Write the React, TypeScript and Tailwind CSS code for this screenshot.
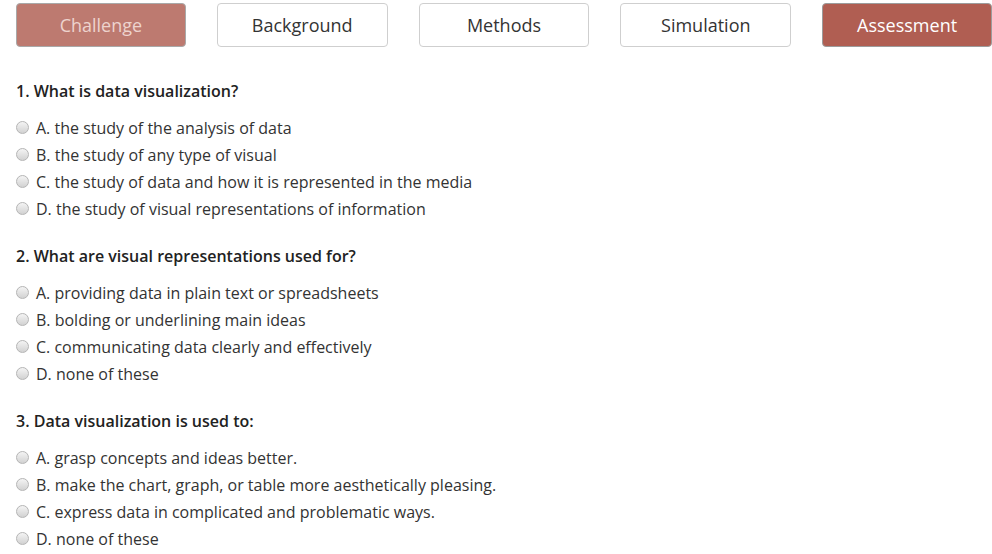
import React from "react"

const tabs = [
  { label: "Challenge", state: "done" },
  { label: "Background", state: "idle" },
  { label: "Methods", state: "idle" },
  { label: "Simulation", state: "idle" },
  { label: "Assessment", state: "active" },
]

const questions = [
  {
    q: "1. What is data visualization?",
    options: [
      "A. the study of the analysis of data",
      "B. the study of any type of visual",
      "C. the study of data and how it is represented in the media",
      "D. the study of visual representations of information",
    ],
  },
  {
    q: "2. What are visual representations used for?",
    options: [
      "A. providing data in plain text or spreadsheets",
      "B. bolding or underlining main ideas",
      "C. communicating data clearly and effectively",
      "D. none of these",
    ],
  },
  {
    q: "3. Data visualization is used to:",
    options: [
      "A. grasp concepts and ideas better.",
      "B. make the chart, graph, or table more aesthetically pleasing.",
      "C. express data in complicated and problematic ways.",
      "D. none of these",
    ],
  },
]

function Radio() {
  return (
    <span className="w-[13px] h-[13px] rounded-full border border-[#b5b5b5] bg-gradient-to-b from-[#f4f4f4] to-[#d2d2d2] shrink-0" />
  )
}

export default function App() {
  return (
    <div className="w-[992px] h-[554px] overflow-hidden bg-white pl-4 font-['Open_Sans',sans-serif] text-[#333]">
      {/* nav tabs */}
      <div className="flex gap-[31px] pt-[3px]">
        {tabs.map((t) => (
          <div
            key={t.label}
            className={
              t.state === "done"
                ? "w-[170px] h-[44px] rounded-[4px] border border-[#a9a9a9] bg-[#bd7a70] text-[#edd3ce] flex items-center justify-center text-[18px]"
                : t.state === "active"
                ? "w-[170px] h-[44px] rounded-[4px] border border-[#9c9c9c] bg-[#b05e52] text-white flex items-center justify-center text-[18px]"
                : "w-[171px] h-[44px] rounded-[4px] border border-[#cfcfcf] bg-white text-[#333] flex items-center justify-center text-[18px]"
            }
          >
            {t.label}
          </div>
        ))}
      </div>

      {/* questions */}
      <div className="flex flex-col gap-[23px] pt-[33px]">
        {questions.map((s) => (
          <div key={s.q}>
            <div className="h-[22px] leading-[22px] text-[16px] font-semibold text-[#222] mb-[12px]">{s.q}</div>
            {s.options.map((o) => (
              <div key={o} className="h-[27px] flex items-center gap-[7px] text-[16px]">
                <Radio />
                <span>{o}</span>
              </div>
            ))}
          </div>
        ))}
      </div>
    </div>
  )
}
